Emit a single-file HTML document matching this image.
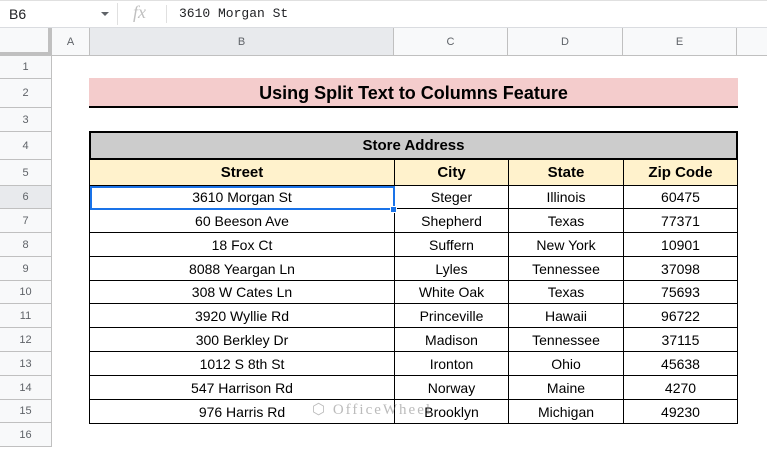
<!DOCTYPE html>
<html><head><style>
*{margin:0;padding:0;box-sizing:border-box}
body{width:767px;height:449px;overflow:hidden;background:#fff;font-family:"Liberation Sans",Arial,sans-serif;position:relative}
.a{position:absolute}
.rh{position:absolute;left:0;width:52px;background:#f8f9fa;border-bottom:1px solid #c0c0c0;border-right:1px solid #c0c0c0;color:#5f6368;font-size:11px;text-align:center;display:flex;align-items:center;justify-content:center}
.ch{position:absolute;top:28px;height:28px;background:#f8f9fa;border-right:1px solid #c0c0c0;border-bottom:1px solid #c0c0c0;color:#5f6368;font-size:11px;display:flex;align-items:center;justify-content:center}
.r{position:absolute;left:89px;width:649px;display:flex;border-bottom:1px solid #000;font-size:14px;color:#000}
.r div{display:flex;align-items:center;justify-content:center;border-left:1px solid #000;height:100%}
.r div:last-child{border-right:1px solid #000}
.c1{width:305px}.c2{width:114px}.c3{width:115px}.c4{width:115px}
</style></head><body>
<div class="a" style="left:0;top:0;width:767px;height:28px;border-bottom:1px solid #dadce0;border-top:1px solid #e0e0e0"></div>
<div class="a" style="left:9px;top:6px;font-size:14px;color:#202124">B6</div>
<div class="a" style="left:101px;top:12px;width:0;height:0;border-left:4px solid transparent;border-right:4px solid transparent;border-top:4px solid #5f6368"></div>
<div class="a" style="left:117px;top:3px;width:1px;height:22px;background:#e0e0e0"></div>
<div class="a" style="left:133px;top:2px;font-family:'Liberation Serif',serif;font-style:italic;font-size:18px;color:#c0c0c0">fx</div>
<div class="a" style="left:166px;top:5px;width:1px;height:18px;background:#e0e0e0"></div>
<div class="a" style="left:179px;top:6px;font-family:'Liberation Mono',monospace;font-size:13px;color:#202124">3610 Morgan St</div>

<div class="a" style="left:0;top:28px;width:52px;height:28px;background:#f8f9fa;border-right:4px solid #c0c0c0;border-bottom:4px solid #c0c0c0"></div>
<div class="ch" style="left:52px;width:38px">A</div>
<div class="ch" style="left:90px;width:304px;background:#e8eaed">B</div>
<div class="ch" style="left:394px;width:114px">C</div>
<div class="ch" style="left:508px;width:115px">D</div>
<div class="ch" style="left:623px;width:114px">E</div>
<div class="ch" style="left:737px;width:40px"></div>

<div class="rh" style="top:56px;height:23px">1</div>
<div class="rh" style="top:79px;height:29px">2</div>
<div class="rh" style="top:108px;height:24px">3</div>
<div class="rh" style="top:132px;height:28px">4</div>
<div class="rh" style="top:160px;height:26px">5</div>
<div class="rh" style="top:186px;height:23px;background:#e8eaed">6</div>
<div class="rh" style="top:209px;height:24px">7</div>
<div class="rh" style="top:233px;height:24px">8</div>
<div class="rh" style="top:257px;height:24px">9</div>
<div class="rh" style="top:281px;height:23px">10</div>
<div class="rh" style="top:304px;height:24px">11</div>
<div class="rh" style="top:328px;height:24px">12</div>
<div class="rh" style="top:352px;height:24px">13</div>
<div class="rh" style="top:376px;height:24px">14</div>
<div class="rh" style="top:400px;height:23px">15</div>
<div class="rh" style="top:423px;height:24px">16</div>

<div class="a" style="left:89px;top:78px;width:649px;height:30px;background:#f4cccc;border-bottom:2px solid #000;font-weight:bold;font-size:18px;text-align:center;line-height:30px">Using Split Text to Columns Feature</div>

<div class="a" style="left:89px;top:131px;width:649px;height:29px;background:#cccccc;border:2px solid #000;font-weight:bold;font-size:15px;text-align:center;line-height:25px">Store Address</div>
<div class="r" style="top:160px;height:26px;background:#fff2cc;font-weight:bold;font-size:15px"><div class="c1">Street</div><div class="c2">City</div><div class="c3">State</div><div class="c4">Zip Code</div></div>
<div class="r" style="top:186px;height:23px"><div class="c1">3610 Morgan St</div><div class="c2">Steger</div><div class="c3">Illinois</div><div class="c4">60475</div></div>
<div class="r" style="top:209px;height:24px"><div class="c1">60 Beeson Ave</div><div class="c2">Shepherd</div><div class="c3">Texas</div><div class="c4">77371</div></div>
<div class="r" style="top:233px;height:24px"><div class="c1">18 Fox Ct</div><div class="c2">Suffern</div><div class="c3">New York</div><div class="c4">10901</div></div>
<div class="r" style="top:257px;height:24px"><div class="c1">8088 Yeargan Ln</div><div class="c2">Lyles</div><div class="c3">Tennessee</div><div class="c4">37098</div></div>
<div class="r" style="top:281px;height:23px"><div class="c1">308 W Cates Ln</div><div class="c2">White Oak</div><div class="c3">Texas</div><div class="c4">75693</div></div>
<div class="r" style="top:304px;height:24px"><div class="c1">3920 Wyllie Rd</div><div class="c2">Princeville</div><div class="c3">Hawaii</div><div class="c4">96722</div></div>
<div class="r" style="top:328px;height:24px"><div class="c1">300 Berkley Dr</div><div class="c2">Madison</div><div class="c3">Tennessee</div><div class="c4">37115</div></div>
<div class="r" style="top:352px;height:24px"><div class="c1">1012 S 8th St</div><div class="c2">Ironton</div><div class="c3">Ohio</div><div class="c4">45638</div></div>
<div class="r" style="top:376px;height:24px"><div class="c1">547 Harrison Rd</div><div class="c2">Norway</div><div class="c3">Maine</div><div class="c4">4270</div></div>
<div class="r" style="top:400px;height:24px"><div class="c1">976 Harris Rd</div><div class="c2">Brooklyn</div><div class="c3">Michigan</div><div class="c4">49230</div></div>

<div class="a" style="left:90px;top:186px;width:305px;height:24px;border:2px solid #1a73e8"></div>
<div class="a" style="left:390px;top:206px;width:7px;height:7px;background:#1a73e8;border:1px solid #fff"></div>
<div class="a" style="left:312px;top:400px;font-size:15px;letter-spacing:2px;color:rgba(120,120,120,0.5);font-family:'Liberation Serif',serif">⬡ OfficeWheel</div>
</body></html>
